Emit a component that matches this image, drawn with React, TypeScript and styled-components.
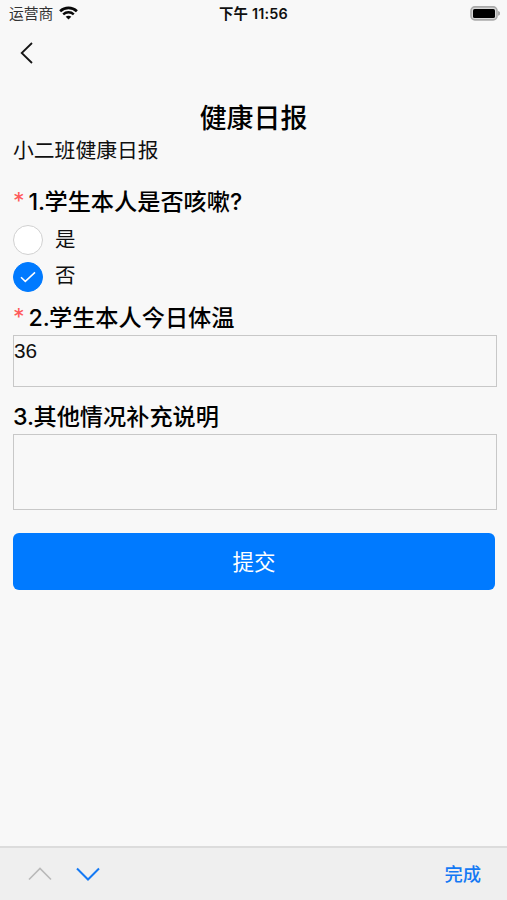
import React, { useState } from 'react';
import styled, { createGlobalStyle } from 'styled-components';

const GlobalStyle = createGlobalStyle`
  * { box-sizing: border-box; }
  body { margin: 0; background: #f8f8f8; }
  button { border: 0; padding: 0; background: none; font: inherit; display: flex; }
`;

const Screen = styled.div`
  width: 507px;
  height: 900px;
  display: flex;
  flex-direction: column;
  overflow: hidden;
  background: #f8f8f8;
  color: #101010;
  font-family: Inter, 'Noto Sans CJK SC', sans-serif;
`;

const StatusBar = styled.header`
  height: 28px;
  padding: 0 7px 0 9px;
  display: grid;
  grid-template-columns: 1fr auto 1fr;
  align-items: center;
  line-height: 28px;
`;

const Carrier = styled.div`
  display: flex;
  align-items: center;
  gap: 6px;
  font-size: 14.8px;
  color: #333;

  svg { margin-bottom: 2px; }
`;

const Clock = styled.div`
  margin-right: 2px;
  font-size: 14.4px;
  font-weight: 600;
  letter-spacing: 0.2px;
  white-space: pre;
`;

const Battery = styled.div`
  display: flex;
  justify-content: flex-end;
  padding-bottom: 2px;
`;

const NavBar = styled.nav`
  height: 72px;
  padding: 14px 0 0 20px;
`;

const Form = styled.form`
  flex: 1;
  padding: 0 10px 0 13px;
`;

const Title = styled.h1`
  margin: 0;
  padding-right: 3px;
  height: 35px;
  line-height: 36px;
  text-align: center;
  font-size: 26.9px;
  font-weight: 500;
  color: #000;
`;

const Subtitle = styled.p`
  margin: 0;
  height: 32px;
  line-height: 32px;
  font-size: 20.8px;
`;

const Question = styled.div<{ $top: number }>`
  display: flex;
  height: 34px;
  margin-top: ${({ $top }) => $top}px;
  line-height: 35px;
  font-size: 23.2px;
  font-weight: 500;
  color: #000;
  white-space: nowrap;
`;

const Required = styled.span`
  width: 15.5px;
  color: #ff5a5a;
  font-weight: 400;
  line-height: 33px;
`;

const Num = styled.span<{ $width: number }>`
  width: ${({ $width }) => $width}px;
`;

const Options = styled.div`
  padding-top: 3px;
`;

const Option = styled.div`
  display: flex;
  align-items: center;
  gap: 12px;
  height: 36.5px;
  font-size: 20.5px;
  line-height: 34px;
  cursor: pointer;
`;

const OptionText = styled.span`
  padding-bottom: 1px;
`;

const Radio = styled.span<{ $checked: boolean }>`
  width: 30px;
  height: 30px;
  border-radius: 50%;
  display: flex;
  align-items: center;
  justify-content: center;
  background: ${({ $checked }) => ($checked ? '#007aff' : '#fff')};
  border: 1px solid ${({ $checked }) => ($checked ? '#007aff' : '#d1d1d1')};
`;

const Field = styled.textarea<{ $height: number }>`
  display: block;
  width: 100%;
  height: ${({ $height }) => $height}px;
  padding: 1px 0;
  border: 1px solid #c8c8c8;
  border-radius: 0;
  outline: 0;
  resize: none;
  background: transparent;
  color: #101010;
  font-family: 'Liberation Sans', 'Noto Sans CJK SC', sans-serif;
  font-size: 20.8px;
  line-height: 28px;
`;

const Submit = styled.button`
  && {
    width: 482px;
    height: 57px;
    margin-top: 23px;
    border-radius: 6px;
    justify-content: center;
    background: #007aff;
    color: #fff;
    font-size: 21.5px;
    line-height: 58px;
  }
`;

const Accessory = styled.footer`
  height: 54px;
  padding: 0 26px 0 28px;
  display: flex;
  align-items: center;
  background: #efefef;
  border-top: 2px solid #dcdcdc;
`;

const Step = styled.button`
  && { margin-right: 24px; }
`;

const Done = styled.button`
  && {
    margin-left: auto;
    color: #1479f4;
    font-size: 18.3px;
    font-weight: 500;
    line-height: 30px;
  }
`;

const WifiIcon = () => (
  <svg width="19" height="14" viewBox="0 0 19 14" fill="none" stroke="#080808">
    <path d="M1.1 5.2C5.9.7 13.1.7 17.9 5.2" strokeWidth="2.7" />
    <path d="M4.2 8.4C7.2 5.6 11.8 5.6 14.8 8.4" strokeWidth="2.4" />
    <path d="M9.5 13.5 6.7 10.7C8.2 9.3 10.8 9.3 12.3 10.7Z" fill="#080808" stroke="none" />
  </svg>
);

const BatteryIcon = () => (
  <svg width="30" height="15" viewBox="0 0 30 15">
    <rect x="1" y="0.9" width="26" height="13" rx="3.8" fill="#d8d8d8" stroke="#aaa" strokeWidth="1.6" />
    <rect x="3" y="2.9" width="22" height="9.2" rx="1.6" fill="#000" />
    <path d="M28 5Q30.5 6 30.5 7.4Q30.5 8.8 28 9.8Z" fill="#aaa" />
  </svg>
);

const BackIcon = () => (
  <svg width="14" height="22" viewBox="0 0 14 22" fill="none" stroke="#151515" strokeWidth="1.8">
    <path d="M12 1 1.7 11 12 21" />
  </svg>
);

const CheckIcon = () => (
  <svg width="16" height="12" viewBox="0 0 16 12" fill="none" stroke="#fff" strokeWidth="1.5">
    <path d="M1 6.2 5.3 10.4 15 1.4" />
  </svg>
);

const Chevron = ({ up }: { up?: boolean }) => (
  <svg width="24" height="14" viewBox="0 0 24 14" fill="none" stroke={up ? '#b9b9b9' : '#1479f4'} strokeWidth={up ? 1.6 : 2}>
    <path d={up ? 'M1 12.5 12 1.5 23 12.5' : 'M1 1.5 12 12.5 23 1.5'} />
  </svg>
);

const options = ['是', '否'];

export default function App() {
  const [answer, setAnswer] = useState('否');
  return (
    <>
      <GlobalStyle />
      <Screen>
        <StatusBar>
          <Carrier>运营商<WifiIcon /></Carrier>
          <Clock>下午 11:56</Clock>
          <Battery><BatteryIcon /></Battery>
        </StatusBar>
        <NavBar>
          <button type="button" aria-label="返回"><BackIcon /></button>
        </NavBar>
        <Form onSubmit={(e) => e.preventDefault()}>
          <Title>健康日报</Title>
          <Subtitle>小二班健康日报</Subtitle>
          <Question $top={18}>
            <Required>*</Required><Num $width={16}>1.</Num>学生本人是否咳嗽?
          </Question>
          <Options role="radiogroup">
            {options.map((o) => (
              <Option key={o} role="radio" aria-checked={answer === o} onClick={() => setAnswer(o)}>
                <Radio $checked={answer === o}>{answer === o && <CheckIcon />}</Radio>
                <OptionText>{o}</OptionText>
              </Option>
            ))}
          </Options>
          <Question $top={6}>
            <Required>*</Required><Num $width={20.5}>2.</Num>学生本人今日体温
          </Question>
          <Field $height={52} defaultValue="36" />
          <Question $top={13}>
            <Num $width={20.5}>3.</Num>其他情况补充说明
          </Question>
          <Field $height={76} />
          <Submit type="submit">提交</Submit>
        </Form>
        <Accessory>
          <Step type="button" aria-label="上一项"><Chevron up /></Step>
          <Step type="button" aria-label="下一项"><Chevron /></Step>
          <Done type="button">完成</Done>
        </Accessory>
      </Screen>
    </>
  );
}
